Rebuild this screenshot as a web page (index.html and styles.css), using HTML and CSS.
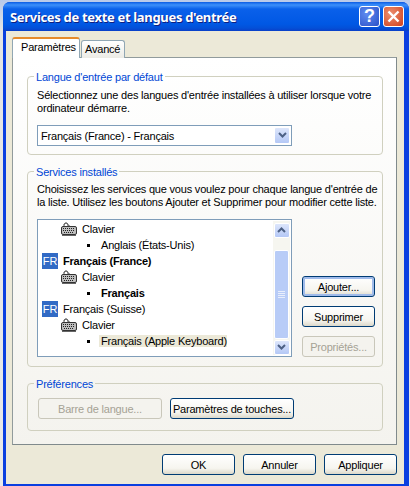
FILE: index.html
```html
<!DOCTYPE html>
<html lang="fr">
  <head>
    <meta charset="UTF-8" />
    <title>Services de texte et langues d'entrée</title>
    <link rel="stylesheet" href="styles.css">
  </head>
  <body>
    <div class="window">
      <div class="titlebar">
        <span class="title">Services de texte et langues d'entrée</span>
        <span class="cap-btn help">?</span>
        <span class="cap-btn close">
          <svg width="13" height="13" viewBox="0 0 13 13"><path d="M1.5 1.5l10 10M11.5 1.5l-10 10" stroke="#fff" stroke-width="2.4" fill="none"/></svg>
        </span>
      </div>
      <div class="content">
        <div class="tabs">
          <span class="tab active">Paramètres</span>
          <span class="tab">Avancé</span>
        </div>
        <div class="panel">
          <fieldset class="group group-default">
            <legend>Langue d'entrée par défaut</legend>
            <p>Sélectionnez une des langues d'entrée installées à utiliser lorsque votre<br>ordinateur démarre.</p>
            <div class="select">
              <span class="select-text">Français (France) - Français</span>
              <span class="sb-btn select-arrow"><svg width="9" height="7" viewBox="0 0 9 7"><path d="M1 1l3.5 3.5L8 1" stroke="#4d6185" stroke-width="2" fill="none"/></svg></span>
            </div>
          </fieldset>
          <fieldset class="group group-services">
            <legend>Services installés</legend>
            <p>Choisissez les services que vous voulez pour chaque langue d'entrée de<br>la liste. Utilisez les boutons Ajouter et Supprimer pour modifier cette liste.</p>
            <div class="services-row">
              <div class="listbox">
                <div class="rows">
                  <div class="row level1">
                    <svg class="kbd" width="16" height="14" viewBox="0 0 16 14"><use href="#kbd-icon"/></svg>
                    <span>Clavier</span>
                  </div>
                  <div class="row level2"><i class="bullet"></i><span class="label">Anglais (États-Unis)</span></div>
                  <div class="row level0 bold"><span class="fr">FR</span><span>Français (France)</span></div>
                  <div class="row level1">
                    <svg class="kbd" width="16" height="14" viewBox="0 0 16 14"><use href="#kbd-icon"/></svg>
                    <span>Clavier</span>
                  </div>
                  <div class="row level2 bold"><i class="bullet"></i><span class="label">Français</span></div>
                  <div class="row level0"><span class="fr">FR</span><span>Français (Suisse)</span></div>
                  <div class="row level1">
                    <svg class="kbd" width="16" height="14" viewBox="0 0 16 14"><use href="#kbd-icon"/></svg>
                    <span>Clavier</span>
                  </div>
                  <div class="row level2"><i class="bullet"></i><span class="label selected">Français (Apple Keyboard)</span></div>
                </div>
                <div class="scrollbar">
                  <span class="sb-btn"><svg width="9" height="7" viewBox="0 0 9 7"><path d="M1 5l3.5-3.5L8 5" stroke="#4d6185" stroke-width="2" fill="none"/></svg></span>
                  <div class="track">
                    <div class="thumb"><i></i><i></i><i></i><i></i></div>
                  </div>
                  <span class="sb-btn"><svg width="9" height="7" viewBox="0 0 9 7"><path d="M1 1l3.5 3.5L8 1" stroke="#4d6185" stroke-width="2" fill="none"/></svg></span>
                </div>
              </div>
              <div class="side-btns">
                <button class="btn focus">Ajouter...</button>
                <button class="btn">Supprimer</button>
                <button class="btn" disabled>Propriétés...</button>
              </div>
            </div>
          </fieldset>
          <fieldset class="group group-prefs">
            <legend>Préférences</legend>
            <div class="prefs-row">
              <button class="btn wide" disabled>Barre de langue...</button>
              <button class="btn wide">Paramètres de touches...</button>
            </div>
          </fieldset>
        </div>
        <div class="footer">
          <button class="btn">OK</button>
          <button class="btn">Annuler</button>
          <button class="btn">Appliquer</button>
        </div>
      </div>
    </div>
    <svg class="defs" width="0" height="0">
      <symbol id="kbd-icon" viewBox="0 0 16 14">
        <path d="M3 4V2h1V1h2v1h1v2M8 4V3" stroke="#444" fill="none"/>
        <rect x="0.5" y="4.5" width="15" height="8" rx="1.5" fill="#bdbdbd" stroke="#333"/>
        <path d="M2 6.5h12M2 8.5h12M3 10.5h10" stroke="#222" stroke-dasharray="1 1"/>
        <path d="M1 13.5h14" stroke="#666"/>
      </symbol>
    </svg>
  </body>
</html>
```

FILE: styles.css
```css
* {
  box-sizing: border-box;
}
html,
body {
  margin: 0;
  height: 100%;
}
body {
  width: 410px;
  height: 486px;
  overflow: hidden;
  padding: 2px 1px 0 3px;
  background: linear-gradient(to bottom, #b9c9ea 0, #e4e4e4 30px, #e9e9e9 100%);
  font-family: "Liberation Sans", Tahoma, sans-serif;
  font-size: 11px;
  letter-spacing: -0.2px;
  color: #000;
}
.window {
  height: 484px;
  display: flex;
  flex-direction: column;
  border-radius: 7px 7px 0 0;
  background: #0a3fe0;
}
.titlebar {
  height: 29px;
  flex: none;
  display: flex;
  align-items: center;
  padding: 0 5px 0 7px;
  gap: 3px;
  border-radius: 7px 7px 0 0;
  background: linear-gradient(to bottom, #0a5be4 0, #3c8ffa 3px, #0a60ea 7px, #0058e4 22px, #0350d8 26px, #0a3fc8 100%);
}
.title {
  flex: 1;
  color: #fff;
  font-family: "Noto Sans", sans-serif;
  font-weight: 700;
  font-size: 13px;
  letter-spacing: -0.32px;
  text-shadow: 1px 1px 0 #0f1f80;
}
.cap-btn {
  width: 21px;
  height: 21px;
  display: flex;
  align-items: center;
  justify-content: center;
  border: 1px solid #fff;
  border-radius: 3px;
  color: #fff;
  font-weight: 700;
  font-size: 18px;
}
.help {
  background: radial-gradient(circle at 35% 35%, #5f8cf0, #2a50c8);
}
.close {
  background: radial-gradient(circle at 35% 35%, #ec8f70, #d0401c);
}
.content {
  flex: 1;
  margin: 0 5px 2px 3px;
  padding: 7px 7px 0 6px;
  background: #ece9d8;
  display: flex;
  flex-direction: column;
}
.tabs {
  display: flex;
  align-items: flex-end;
  gap: 1px;
  height: 20px;
  position: relative;
  z-index: 1;
  margin-bottom: -1px;
}
.tab {
  height: 18px;
  width: 44px;
  padding: 0 0 0 3px;
  line-height: 17px;
  border: 1px solid #91a7b4;
  border-bottom: none;
  border-radius: 3px 3px 0 0;
  background: linear-gradient(to bottom, #fff, #ecebe5);
}
.tab.active {
  height: 21px;
  width: 68px;
  padding: 0 0 0 8px;
  border-top: 2px solid #e68b2c;
  background: #fff;
}
.panel {
  height: 388px;
  flex: none;
  display: flex;
  flex-direction: column;
  padding: 11px 13px 0 14px;
  gap: 9px;
  border: 1px solid #919b9c;
  border-right-color: #808a8c;
  border-bottom-color: #808a8c;
  background: linear-gradient(to bottom, #fff, #f4f3ee);
}
.group {
  margin: 0;
  min-width: 0;
  padding: 0 9px 0 9px;
  border: 1px solid #d0d0bf;
  border-radius: 4px;
}
.group legend {
  padding: 2px 2px 0;
  margin-left: -3px;
  color: #0046d5;
  line-height: 13px;
}
.group p {
  margin: 4px 0 0;
  line-height: 13px;
  white-space: nowrap;
}
.group-default {
  height: 86px;
}
.group-default p {
  margin-top: 5px;
}
.group-services {
  height: 203px;
}
.group-prefs {
  height: 55px;
}
.select {
  margin-top: 10px;
  width: 255px;
  height: 21px;
  display: flex;
  align-items: center;
  justify-content: space-between;
  padding: 0 1px 0 3px;
  border: 1px solid #7f9db9;
  background: #fff;
}
.sb-btn {
  width: 16px;
  height: 15px;
  flex: none;
  display: flex;
  align-items: center;
  justify-content: center;
  border: 1px solid #fff;
  border-radius: 2px;
  background: linear-gradient(to bottom, #dde6fb, #b4c8f6);
}
.select-arrow {
  height: 17px;
}
.services-row {
  display: flex;
  align-items: flex-end;
  gap: 10px;
  margin-top: 10px;
}
.listbox {
  width: 255px;
  height: 138px;
  flex: none;
  display: flex;
  padding: 1px;
  border: 1px solid #7f9db9;
  background: #fff;
}
.rows {
  flex: 1;
  overflow: hidden;
}
.row {
  height: 16px;
  display: flex;
  align-items: center;
  white-space: nowrap;
}
.bold {
  font-weight: 700;
}
.level0 {
  padding-left: 3px;
  gap: 5px;
}
.level1 {
  padding-left: 22px;
  gap: 5px;
}
.level2 {
  padding-left: 48px;
}
.fr {
  width: 16px;
  height: 16px;
  flex: none;
  background: #316ac5;
  color: #fff;
  font-weight: 400;
  line-height: 16px;
  text-align: center;
}
.bullet {
  width: 3px;
  height: 3px;
  flex: none;
  background: #000;
}
.label {
  margin-left: 9px;
  padding: 0 2px;
}
.selected {
  background: #ece9d8;
  width: 128px;
}
.scrollbar {
  width: 17px;
  flex: none;
  display: flex;
  flex-direction: column;
  align-items: center;
  padding-top: 2px;
  background: #f6f6f0;
}
.track {
  flex: 1;
  width: 100%;
  padding: 12px 0 1px;
  display: flex;
}
.thumb {
  flex: 1;
  margin: 0 1px;
  display: flex;
  flex-direction: column;
  align-items: center;
  justify-content: center;
  gap: 1px;
  border: 1px solid #fff;
  border-radius: 2px;
  background: #b8ccf7;
}
.thumb i {
  width: 7px;
  height: 1px;
  background: #e8eefc;
}
.side-btns {
  display: flex;
  flex-direction: column;
  gap: 9px;
}
.btn {
  width: 73px;
  height: 21px;
  padding: 0;
  font: inherit;
  letter-spacing: inherit;
  white-space: nowrap;
  color: #000;
  border: 1px solid #003c74;
  border-radius: 3px;
  background: linear-gradient(to bottom, #fff 0, #f6f5ef 70%, #dcd8ca 100%);
}
.btn.focus {
  box-shadow: inset 0 0 0 2px #a0bbea;
}
.btn:disabled {
  color: #a5a295;
  border-color: #c9c7ba;
  background: #f4f3ee;
}
.prefs-row {
  display: flex;
  gap: 8px;
  margin: 7px 0 0 1px;
}
.btn.wide {
  width: 124px;
}
.footer {
  display: flex;
  justify-content: flex-end;
  gap: 8px;
  margin-top: 9px;
}
.defs {
  position: absolute;
}
```
